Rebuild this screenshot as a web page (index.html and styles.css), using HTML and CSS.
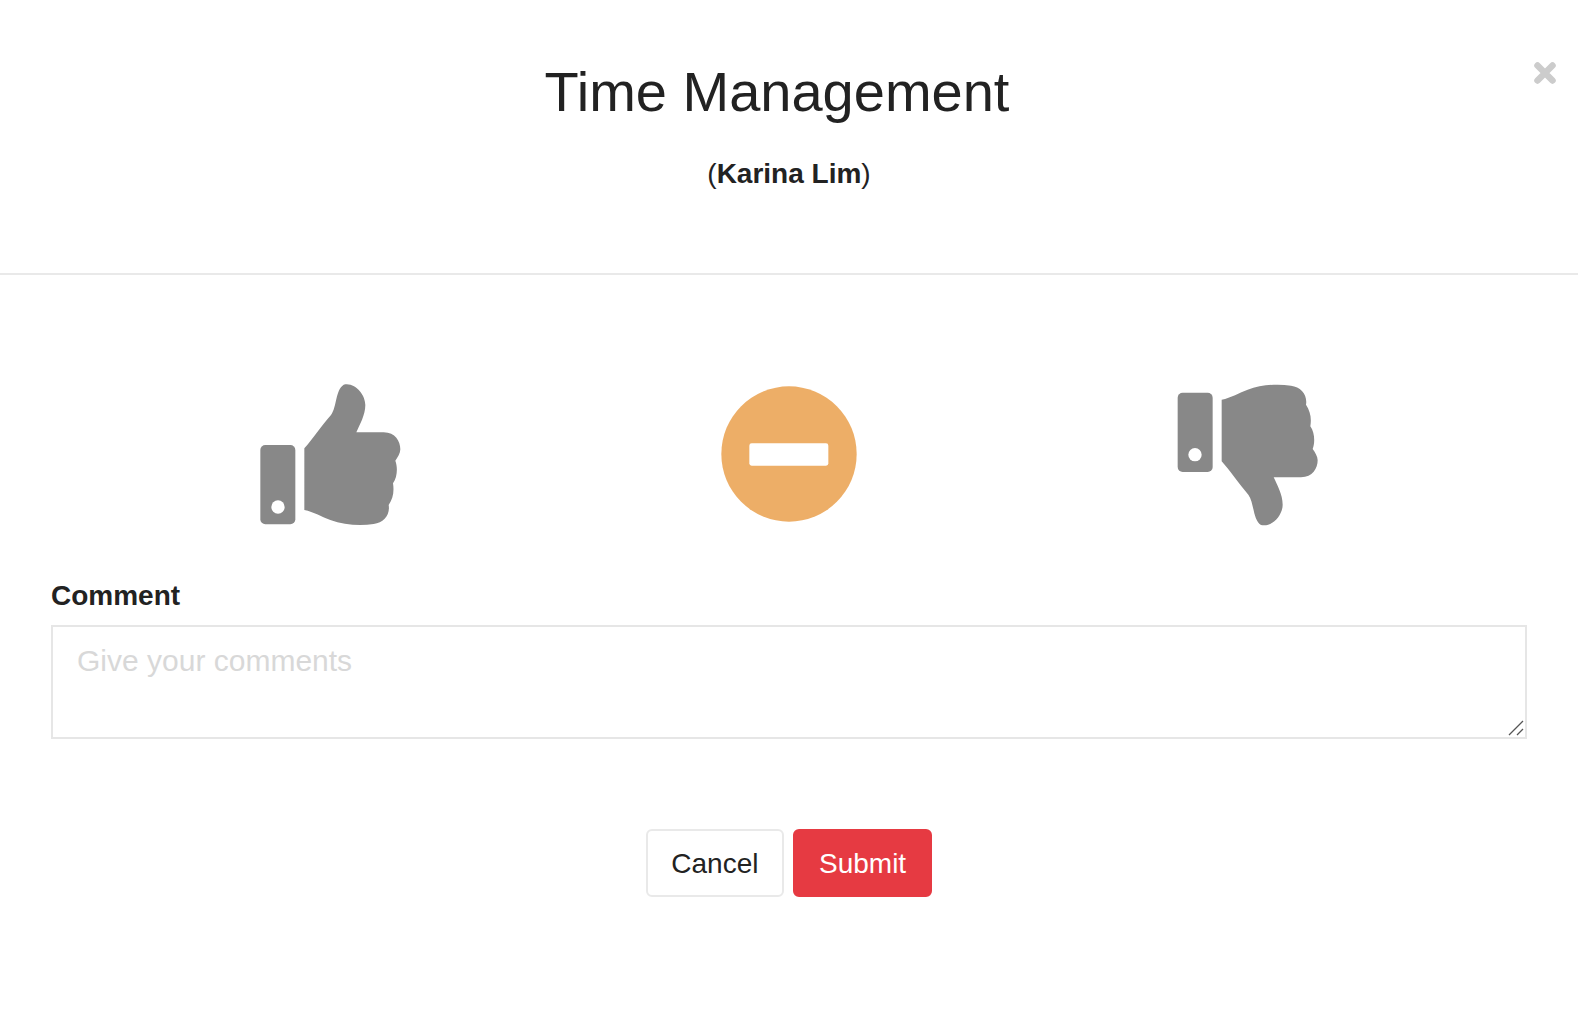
FILE: index.html
```html
<!DOCTYPE html>
<html lang="en">
<head>
    <meta charset="UTF-8">
    <meta name="viewport" content="width=device-width, initial-scale=1.0">
    <title>Time Management</title>
    <link rel="stylesheet" href="styles.css">
</head>
<body>
    <div class="modal">
        <div class="modal-header">
            <h1 class="modal-title">Time Management</h1>
            <p class="modal-subtitle">(<b>Karina Lim</b>)</p>
            <button class="close" type="button" aria-label="Close">
                <svg width="22" height="22" viewBox="0 0 22 22"><path d="M3.5 3.5 18.5 18.5M18.5 3.5 3.5 18.5" stroke="#ccc" stroke-width="6.5" stroke-linecap="round"/></svg>
            </button>
        </div>

        <form class="modal-body">
            <div class="ratings">
                <!-- good -->
                <svg class="rating" viewBox="0 0 540 510">
                    <rect x="61" y="225" width="105" height="238" rx="15" fill="#888"/>
                    <circle cx="114" cy="411" r="20" fill="#fff"/>
                    <path fill="#888" d="M193 235C216 210 246 165 273 135C291 110 286 60 311 44C346 36 376 75 376 105C376 135 359 165 349 187L431 187C466 187 481 215 481 238C481 250 473 262 466 272C473 290 473 320 459 340C463 365 459 385 446 405C451 435 431 458 401 462C361 468 311 465 271 450C246 442 221 425 193 420Z"/>
                </svg>
                <!-- neutral -->
                <svg class="rating" viewBox="0 0 540 510">
                    <circle cx="270" cy="252" r="203" fill="#edae67"/>
                    <rect x="151" y="220" width="237" height="67" rx="7" fill="#fff"/>
                </svg>
                <!-- bad -->
                <svg class="rating" viewBox="0 0 540 510">
                    <rect x="59" y="68" width="105" height="238" rx="15" fill="#888"/>
                    <circle cx="111" cy="254" r="20" fill="#fff"/>
                    <path fill="#888" transform="translate(-2 509) scale(1 -1)" d="M193 235C216 210 246 165 273 135C291 110 286 60 311 44C346 36 376 75 376 105C376 135 359 165 349 187L431 187C466 187 481 215 481 238C481 250 473 262 466 272C473 290 473 320 459 340C463 365 459 385 446 405C451 435 431 458 401 462C361 468 311 465 271 450C246 442 221 425 193 420Z"/>
                </svg>
            </div>

            <label class="comment-label" for="comment">Comment</label>
            <div class="comment-box">
                <textarea id="comment" class="comment" placeholder="Give your comments"></textarea>
                <svg class="grip" width="16" height="16" viewBox="0 0 16 16"><path d="M1 15 15 1M9 15 15 9" stroke="#555" stroke-width="1.3" fill="none"/></svg>
            </div>

            <div class="actions">
                <button class="btn btn-cancel" type="button">Cancel</button>
                <button class="btn btn-submit" type="button">Submit</button>
            </div>
        </form>
    </div>
</body>
</html>
```

FILE: styles.css
```css
body{
    margin: 0;
    background-color: #fff;
    color: #222;
    font-family: "Liberation Sans", Arial, sans-serif;
}

.modal-header{
    position: relative;
    height: 273px;
    border-bottom: 2px solid #e9e9e9;
    text-align: center;
}

.modal-title{
    margin: 0;
    padding: 57px 24px 0 0;
    font-size: 56px;
    line-height: 70px;
    font-weight: 400;
}

.modal-subtitle{
    margin: 30px 0 0;
    font-size: 28px;
    line-height: 34px;
}

.close{
    position: absolute;
    top: 62px;
    right: 22px;
    padding: 0;
    border: 0;
    background: none;
    line-height: 0;
}

.modal-body{
    padding: 0 51px;
}

.ratings{
    display: grid;
    grid-template-columns: repeat(3, 1fr);
    justify-items: center;
    margin: 95px 49px 0;
}

.rating{
    display: block;
    width: 180px;
    height: 170px;
}

.comment-label{
    display: block;
    margin-top: 39px;
    font-size: 28px;
    line-height: 34px;
    font-weight: 700;
}

.comment-box{
    position: relative;
    margin-top: 12px;
}

.comment{
    display: block;
    box-sizing: border-box;
    width: 100%;
    height: 114px;
    padding: 16px 24px;
    border: 2px solid #e6e6e6;
    border-radius: 0;
    outline: none;
    resize: none;
    font-family: inherit;
    font-size: 30px;
    line-height: 36px;
}

.comment::placeholder{
    color: #d8d8d8;
}

.grip{
    position: absolute;
    right: 3px;
    bottom: 3px;
}

.actions{
    display: flex;
    justify-content: center;
    gap: 9px;
    margin-top: 90px;
}

.btn{
    box-sizing: border-box;
    height: 68px;
    padding: 1px 24px 0;
    border-radius: 6px;
    font-family: inherit;
    font-size: 28px;
}

.btn-cancel{
    padding: 1px 23.5px 0;
    border: 2px solid #e9e9e9;
    background-color: #fff;
    color: #222;
}

.btn-submit{
    border: 2px solid #e63a42;
    background-color: #e63a42;
    color: #fff;
}
```
